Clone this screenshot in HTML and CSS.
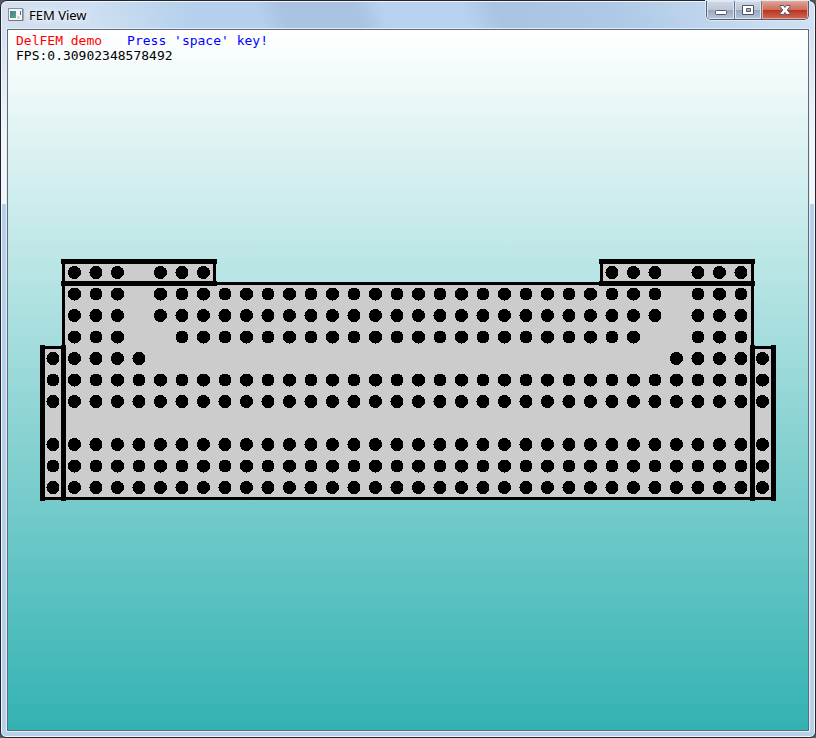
FILE: index.html
```html
<!DOCTYPE html>
<html lang="en">
<head>
<meta charset="utf-8">
<title>FEM View</title>
<link rel="stylesheet" href="styles.css">
</head>
<body>
<div class="window">
  <header class="titlebar">
    <svg class="app-icon" viewBox="0 0 16 16" aria-hidden="true">
      <defs>
        <linearGradient id="pane" x1="0" y1="0" x2="1" y2="1">
          <stop offset="0" stop-color="#4a78a8"/>
          <stop offset="1" stop-color="#4fae74"/>
        </linearGradient>
      </defs>
      <rect x="0.5" y="1.5" width="14" height="12" fill="#f6f6f6" stroke="#8b9097"/>
      <path d="M1 13.5h14V2" fill="none" stroke="#6f757c"/>
      <rect x="2" y="4" width="6" height="7" fill="url(#pane)"/>
      <rect x="9" y="9" width="3" height="3" fill="#d5d8dc"/>
      <path d="M12.500 4v4" stroke="#3f6f9c"/>
    </svg>
    <h1 class="title">FEM View</h1>
    <div class="controls">
      <button class="control control-min" type="button" aria-label="Minimize">
        <svg viewBox="0 0 14 12"><rect x="1.5" y="6.5" width="11" height="4" rx="1" fill="#fff" stroke="#535668"/></svg>
      </button>
      <button class="control" type="button" aria-label="Maximize">
        <svg viewBox="0 0 14 12"><path d="M1.5 1.5h11v9h-11z M5.500 4.500v3h4v-3z" fill="#fff" fill-rule="evenodd" stroke="#535668"/></svg>
      </button>
      <button class="control control-close" type="button" aria-label="Close">
        <svg viewBox="0 0 14 12"><path d="M2 1.500h3.500L7 3.500l1.500-2H12v1L9.300 6l2.700 3.500v1H8.500L7 8.500l-1.500 2H2v-1L4.700 6 2 2.500z" fill="#fff" stroke="#535668"/></svg>
      </button>
    </div>
  </header>
  <main class="view">
    <div class="overlay">
      <p class="line"><span class="name">DelFEM demo</span><span class="hint">Press 'space' key!</span></p>
      <p class="line">FPS:0.30902348578492</p>
    </div>
    <svg class="scene" viewBox="0 0 800 700" shape-rendering="crispEdges" role="img" aria-label="Packed particle domain">
      <g fill="#ccc">
        <path d="M55 231h152v22h386v-22h152v86h21v152H34V317h21z"/>
      </g>
      <g>
        <path d="M54 252h3v217h-3zM743 252h3v217h-3zM205 231h3v24h-3zM592 231h3v24h-3zM54 231h3v24h-3zM743 231h3v24h-3z"/>
        <path d="M54 252h692v3H54zM34 316h23v3H34zM743 316h23v3h-23zM34 467h732v3H34z"/>
        <path d="M53 229h156v5H53zM53 251h156v5H53zM591 229h156v5H591zM591 251h156v5H591z"/>
        <path d="M32 315h5v156h-5zM53 315h5v156h-5zM742 315h5v156h-5zM763 315h5v156h-5z"/>
      </g>
      <g id="dots"></g>
    </svg>
  </main>
</div>
<script src="scene.js"></script>
</body>
</html>
```
FILE: styles.css
```css
* {
  box-sizing: border-box;
}

body {
  margin: 0;
  background: #55595e;
}

.window {
  display: flex;
  flex-direction: column;
  height: 100vh;
  padding: 0 6px 6px;
  border: 1px solid #24262f;
  border-radius: 7px 7px 6px 6px;
  box-shadow: inset 0 0 0 1px #eef5fc;
  background:
    linear-gradient(#d3e0f0, #f3f7fc 110px, #f3f7fc) 0 28px / 6px 175px no-repeat,
    linear-gradient(#d3e0f0, #f3f7fc 110px, #f3f7fc) 100% 28px / 6px 175px no-repeat,
    linear-gradient(70deg, #d3e0f0 0, #cddff1 12%, #b4d0ec 24%, #b4d0ec 32%, #a9c3e0 35%, #a9c3e0 44%, #b6d2ee 47%, #b6d2ee 57%, #a9c4e0 61%, #adc9e6 75%, #c8dbf0 92%, #d3e1f2 100%) 0 0 / 100% 28px no-repeat,
    #b7d0ec;
}

.titlebar {
  display: flex;
  align-items: center;
  height: 28px;
  padding-left: 1px;
}

.app-icon {
  width: 16px;
  height: 16px;
}

.title {
  flex: 1;
  margin: 0;
  padding-left: 5px;
  color: #000;
  font: 13px/16px "Noto Sans", sans-serif;
  text-shadow: 0 0 6px #fff, 0 0 10px #fff;
}

.controls {
  display: flex;
  align-self: flex-start;
  border: 1px solid #545d6c;
  border-top: 0;
  border-radius: 0 0 5px 5px;
  box-shadow: 0 0 0 1px #dce9f7;
  overflow: hidden;
}

.control {
  display: flex;
  align-items: center;
  justify-content: center;
  width: 27px;
  height: 18px;
  padding: 0;
  border: 0;
  border-right: 1px solid #69758a;
  box-shadow: inset 0 0 0 1px #dfe8f2;
  background: linear-gradient(#d0d9e6 0, #bdc7d7 48%, #98a7bc 50%, #b6c7dc 100%);
}

.control svg {
  flex: none;
  width: 14px;
  height: 12px;
}

.control-min {
  width: 28px;
}

.control-close {
  width: 46px;
  border-right: 0;
  box-shadow: inset 0 0 0 1px #e5a99c;
  background: linear-gradient(#e0a397 0, #cf6f5d 48%, #b83320 50%, #d3694f 100%);
}

.view {
  position: relative;
  flex: 1;
  min-height: 0;
  border: 1px solid #5b6b7a;
  box-shadow: 0 0 0 1px #e4eef9;
  background: linear-gradient(#fff, #33b2b2);
}

.overlay {
  position: absolute;
  top: 3px;
  left: 8px;
  color: #000;
  font: 13px/15px "DejaVu Sans Mono", monospace;
}

.line {
  display: flex;
  gap: 25px;
  margin: 0;
}

.name {
  color: #f00;
}

.hint {
  color: #00f;
}

.scene {
  display: block;
  width: 100%;
  height: 100%;
}
```
FILE: scene.js
```js
// Each row lists inclusive column ranges that hold particles.
const rows = [
  [[0, 2], [4, 6], [25, 27], [29, 31]],
  [[0, 2], [4, 27], [29, 31]],
  [[0, 2], [4, 27], [29, 31]],
  [[0, 2], [5, 26], [29, 31]],
  [[-1, 3], [28, 32]],
  [[-1, 32]],
  [[-1, 32]],
  [],
  [[-1, 32]],
  [[-1, 32]],
  [[-1, 32]]
];
const pitch = 21.5;
const group = document.getElementById("dots");

rows.forEach((ranges, row) => {
  for (const [first, last] of ranges) {
    for (let col = first; col <= last; col++) {
      const dot = document.createElementNS("http://www.w3.org/2000/svg", "circle");
      dot.setAttribute("cx", 66.5 + col * pitch);
      dot.setAttribute("cy", 242.5 + row * pitch);
      dot.setAttribute("r", 6.5);
      group.append(dot);
    }
  }
});
```
